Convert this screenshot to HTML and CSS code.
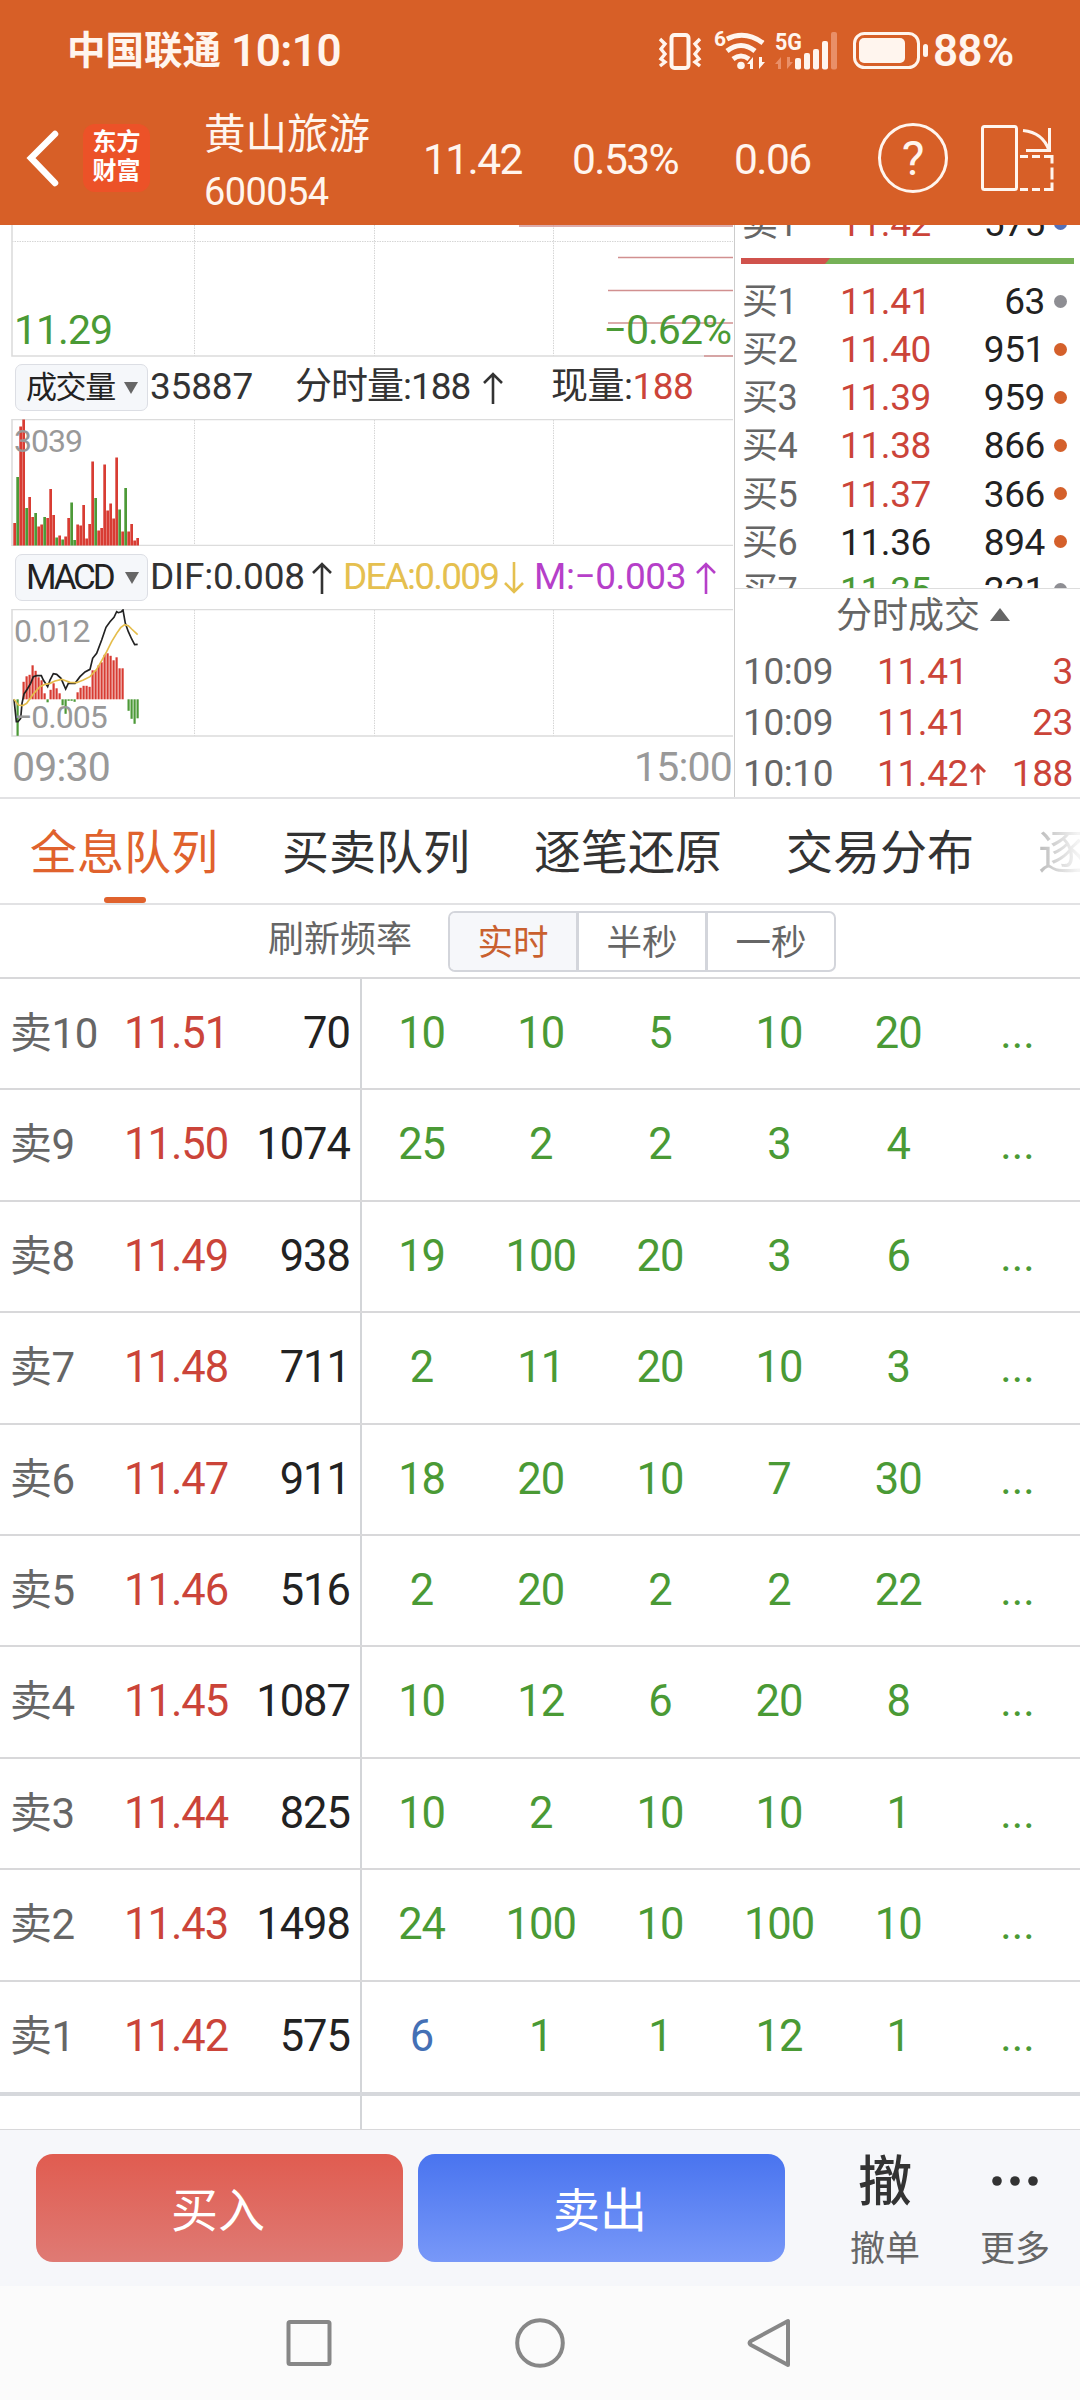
FILE: index.html
```html
<!DOCTYPE html>
<html lang="zh-CN">

<head>
    <meta charset="UTF-8">
    <meta name="viewport" content="width=device-width, initial-scale=1.0">
    <title>黄山旅游 600054</title>
    <link rel="stylesheet" href="styles.css">
</head>

<body>
    <header>
        <div class="status">
            <span class="carrier">中国联通</span>
            <span class="clock">10:10</span>
            <svg class="status-icons" width="275" height="44" viewBox="655 29 275 44">
                <g fill="none" stroke="#fff5ee" stroke-width="4">
                    <rect x="671.5" y="35" width="17" height="33" rx="3" />
                    <path stroke-width="3.4" d="M660 39l5 5-4 5 4 5-4 5 4 3-5 4M700 39l-5 5 4 5-4 5 4 5-4 3 5 4" />
                    <g stroke-width="5">
                        <path d="M727 39q18-9 36 4M727 51q14-11 28 0M733 59q8-6 16 0" />
                    </g>
                    <rect x="854.5" y="33.5" width="64" height="34" rx="10" stroke-width="3" />
                </g>
                <g fill="#fff5ee">
                    <circle cx="741" cy="65.500" r="3.800" />
                    <path d="M747 64l6-7v12h-3v-5zM765 62l-6 7V57h3v5z" />
                    <rect x="795" y="58" width="6" height="11.500" rx="2" />
                    <rect x="804" y="53" width="6" height="16.500" rx="2" />
                    <rect x="813" y="49" width="6" height="20.500" rx="2" />
                    <rect x="822" y="41" width="6" height="28.500" rx="2" />
                    <rect x="859" y="38" width="46" height="25" rx="5" />
                    <rect x="923" y="44" width="5" height="13" rx="2.500" />
                    <text x="714" y="46" font-size="21" font-weight="700">6</text>
                    <text x="775" y="50" font-size="24" font-weight="700" textLength="27" lengthAdjust="spacingAndGlyphs">5G</text>
                </g>
                <g fill="#e98f68">
                    <rect x="831" y="32" width="6" height="37.500" rx="2" />
                    <path d="M775 64l6-7v12h-3v-5zM793 62l-6 7V57h3v5z" />
                </g>
            </svg>
            <span class="battery">88%</span>
        </div>
        <div class="titlebar">
            <svg class="back" width="36" height="60" viewBox="0 0 36 60">
                <path d="M30 6L6 30l24 25" fill="none" stroke="#fff" stroke-width="6.500" stroke-linecap="round" />
            </svg>
            <div class="logo">东方<br>财富</div>
            <div class="stock">
                <div class="name">黄山旅游</div>
                <div class="code">600054</div>
            </div>
            <div class="quote price">11.42</div>
            <div class="quote pct">0.53%</div>
            <div class="quote diff">0.06</div>
            <div class="help">?</div>
            <svg class="rotate" width="76" height="70" viewBox="980 122 76 70" fill="none" stroke="#fff5ee"
                stroke-width="3">
                <rect x="983.500" y="125.500" width="34" height="63" rx="2" />
                <path d="M1024 129.500q20 2 26 20M1050.500 127v22.500h-23.500" />
                <path d="M1021 155.500h8m4 0h8m4 0h8v7m0 4v12m0 3v7h-8m-4 0h-8m-4 0h-8" />
            </svg>
        </div>
    </header>

    <main class="market">
        <section class="charts">
            <div class="box minute">
                <svg width="735" height="132" viewBox="0 225 735 132">
                    <path class="grid" d="M12 241.500H733M194.500 225V356M374.500 225V356M553.500 225V356" />
                    <path class="frame" d="M12 225V356H733" />
                    <path class="level" d="M519 226H733M618 257.500H733M608 290.500H733M608 323H733M704 356H733" />
                </svg>
                <span class="low">11.29</span>
                <span class="lowpct">−0.62%</span>
            </div>
            <div class="legend">
                <span class="chip">成交量<i></i></span>
                <span class="l-vol">35887</span>
                <span class="l-min">分时量:188</span><svg class="arr"><use href="#up" /></svg>
                <span class="l-now">现量:<b>188</b></span>
            </div>
            <div class="box">
                <svg width="735" height="127" viewBox="0 419 735 127">
                    <path class="grid" d="M194.500 420V545M374.500 420V545M553.500 420V545" />
                    <path class="frame" d="M733 419.500H12V545.500H733" />
                    <g id="volume"></g>
                </svg>
                <span class="mark top">3039</span>
            </div>
            <div class="legend">
                <span class="chip macd">MACD<i></i></span>
                <span class="dif">DIF:0.008</span><svg class="arr"><use href="#up" /></svg>
                <span class="dea">DEA:0.009</span><svg class="arr yellow"><use href="#down" /></svg>
                <span class="m">M:−0.003</span><svg class="arr purple"><use href="#up" /></svg>
            </div>
            <div class="box">
                <svg width="735" height="128" viewBox="0 609 735 128">
                    <path class="grid" d="M194.500 610V736M374.500 610V736M553.500 610V736" />
                    <path class="frame" d="M733 609.500H12V736H733" />
                    <g id="macd"></g>
                    <g transform="translate(0 540) scale(.33333)" fill="none" stroke-width="5">
                        <polyline stroke="#222" points="42,478 49,545 54,545 62,535 66,490 72,462 82,447 92,430 100,410 110,407 124,407 130,420 143,440 150,420 160,401 170,403 183,415 197,447 205,430 225,430 240,410 255,396 270,388 278,355 290,340 305,300 318,262 330,245 342,232 350,215 355,218 364,215 369,210 376,250 385,275 395,297 404,314 413,313" />
                        <polyline stroke="#e5bd4b" points="42,478 55,495 68,497 80,490 100,462 120,440 135,433 150,430 165,423 185,418 210,427 230,428 250,420 270,410 290,388 305,362 320,335 335,305 350,280 362,263 374,254 385,257 395,267 413,284" />
                    </g>
                </svg>
                <span class="mark top">0.012</span>
                <span class="mark bottom">−0.005</span>
            </div>
            <div class="times"><span>09:30</span><span>15:00</span></div>
        </section>

        <aside class="book">
            <div class="levels">
                <div class="lv"><span>卖1</span><span class="red">11.42</span><span>575</span><i class="blue"></i></div>
                <svg class="ratio" width="333" height="6">
                    <rect width="333" height="6" fill="#76b157" />
                    <path d="M0 0h89l-5 6H0z" fill="#d0524c" />
                </svg>
                <div class="lv"><span>买1</span><span class="red">11.41</span><span>63</span><i class="gray"></i></div>
                <div class="lv"><span>买2</span><span class="red">11.40</span><span>951</span><i></i></div>
                <div class="lv"><span>买3</span><span class="red">11.39</span><span>959</span><i></i></div>
                <div class="lv"><span>买4</span><span class="red">11.38</span><span>866</span><i></i></div>
                <div class="lv"><span>买5</span><span class="red">11.37</span><span>366</span><i></i></div>
                <div class="lv"><span>买6</span><span>11.36</span><span>894</span><i></i></div>
                <div class="lv"><span>买7</span><span class="green">11.35</span><span>231</span><i class="gray"></i></div>
            </div>
            <div class="deals">
                <div class="deals-title">分时成交<i></i></div>
                <div class="deal"><span>10:09</span><span class="red">11.41</span><span class="red">3</span></div>
                <div class="deal"><span>10:09</span><span class="red">11.41</span><span class="red">23</span></div>
                <div class="deal"><span>10:10</span><span class="red">11.42<svg width="18" height="24" viewBox="0 0 18 24">
                            <path d="M9 23V3M2 10l7-7 7 7" fill="none" stroke="#cb4439" stroke-width="3" />
                        </svg></span><span class="red">188</span></div>
            </div>
        </aside>
    </main>

    <nav class="tabs">
        <span class="active">全息队列</span>
        <span>买卖队列</span>
        <span>逐笔还原</span>
        <span>交易分布</span>
        <span class="fade">逐</span>
    </nav>

    <div class="freq">
        <label>刷新频率</label>
        <div class="seg">
            <span class="on">实时</span>
            <span>半秒</span>
            <span>一秒</span>
        </div>
    </div>

    <div class="queue" id="queue"></div>
    <div class="queue-end"><div></div></div>

    <footer class="trade">
        <button class="buy">买入</button>
        <button class="sell">卖出</button>
        <div class="act cancel"><b>撤</b><span>撤单</span></div>
        <div class="act more">
            <svg width="46" height="10" fill="#333">
                <circle cx="5" cy="5" r="4.800" />
                <circle cx="23" cy="5" r="4.800" />
                <circle cx="41" cy="5" r="4.800" />
            </svg>
            <span>更多</span>
        </div>
    </footer>

    <div class="sysnav">
        <svg width="540" height="60" viewBox="270 2313 540 60" fill="none" stroke="#878787" stroke-width="4">
            <rect x="288.500" y="2322" width="41" height="42" rx="1.500" />
            <circle cx="540" cy="2343" r="22.800" />
            <path d="M788 2321v44l-37-20q-3-2 0-4z" stroke-linejoin="round" />
        </svg>
    </div>

    <svg class="defs">
        <symbol id="up" viewBox="0 0 20 34">
            <path d="M10 33V3M1 12l9-9 9 9" fill="none" stroke="currentColor" stroke-width="2.600" />
        </symbol>
        <symbol id="down" viewBox="0 0 20 34">
            <path d="M10 1v30M1 22l9 9 9-9" fill="none" stroke="currentColor" stroke-width="2.600" />
        </symbol>
    </svg>

    <script>
        const RED = '#d83c33';
        const GREEN = '#4d9a38';

        // height in px, negative = falling minute
        const volume = [22.5, -68.5, 119, 126, -37.5, 48.500, 28.500, -32.500, 19, 21, -28.500, 27.500, 56.500, 30.500, -8, 10, -6, 9, 27.500, -43,
            -5.500, 21, 20, 40.500, 7, 21.500, 84, -47.500, 15, 17.500, 81, 35, 42, 27, 88, -36, 14, -57.500, 14, 21.500, 5, 7.500];
        const macd = [0, -36.500, 0, 17.500, 23, 24.500, 34, 28.500, 22, 19, 6, -3, 9.500, 16, 11, 6, -6, -14.500, -1.500, -1.500, -2.500, 7, 11.500, 13.500,
            13.500, 12.500, 29, 29, 34, 37, 44.500, 46, 43.500, 39, 42, 31, 31, 0, -11.500, -19.500, -24.500, -19];

        document.getElementById('volume').innerHTML = volume.map((h, i) =>
            `<rect x="${13.3 + i * 3}" y="${545.5 - Math.abs(h)}" width="2.700" height="${Math.abs(h)}" fill="${h > 0 ? RED : GREEN}"/>`).join('');
        document.getElementById('macd').innerHTML = macd.map((h, i) =>
            `<rect x="${13.5 + i * 3}" y="${h > 0 ? 699.3 - h : 699.3}" width="2.200" height="${Math.abs(h)}" fill="${h > 0 ? RED : GREEN}"/>`).join('');

        const rows = [
            ['卖10', '11.51', 70, 10, 10, 5, 10, 20],
            ['卖9', '11.50', 1074, 25, 2, 2, 3, 4],
            ['卖8', '11.49', 938, 19, 100, 20, 3, 6],
            ['卖7', '11.48', 711, 2, 11, 20, 10, 3],
            ['卖6', '11.47', 911, 18, 20, 10, 7, 30],
            ['卖5', '11.46', 516, 2, 20, 2, 2, 22],
            ['卖4', '11.45', 1087, 10, 12, 6, 20, 8],
            ['卖3', '11.44', 825, 10, 2, 10, 10, 1],
            ['卖2', '11.43', 1498, 24, 100, 10, 100, 10],
            ['卖1', '11.42', 575, 6, 1, 1, 12, 1]
        ];
        document.getElementById('queue').innerHTML = rows.map(([label, price, vol, ...orders], r) => `
            <div class="row">
                <div class="side">
                    <span class="label">${label}</span><span class="red">${price}</span><span class="vol">${vol}</span>
                </div>
                <div class="orders">
                    ${orders.map((n, i) => `<span${r === 9 && i === 0 ? ' class="mine"' : ''}>${n}</span>`).join('')}
                    <span class="dots">...</span>
                </div>
            </div>`).join('');
    </script>
</body>

</html>
```
FILE: styles.css
```css
* {
    box-sizing: border-box;
}

body {
    margin: 0;
    width: 1080px;
    height: 2400px;
    overflow: hidden;
    display: flex;
    flex-direction: column;
    background: #fff;
    color: #222;
    font-family: Roboto, "Noto Sans CJK SC", sans-serif;
    line-height: 1.2;
}

svg {
    display: block;
    flex: none;
}

.defs {
    display: none;
}

.red {
    color: #cb4439;
}

.green {
    color: #4a9a35;
}

/* header */
header {
    height: 225px;
    background: #d75f27;
    color: #fff5ee;
    flex: none;
}

.status {
    height: 102px;
    padding-left: 67px;
    display: flex;
    align-items: center;
    white-space: nowrap;
}

.carrier {
    font-size: 38.5px;
    font-weight: 700;
    width: 164px;
}

.clock,
.battery {
    font-size: 44px;
    font-weight: 600;
}

.clock {
    width: 424px;
    letter-spacing: -0.5px;
}

.battery {
    margin-left: 3px;
    letter-spacing: -0.8px;
}

.titlebar {
    height: 112px;
    display: flex;
    align-items: center;
    padding-left: 25px;
}

.logo {
    width: 67px;
    height: 68px;
    margin-left: 22px;
    border-radius: 12px;
    background: #ec5228;
    color: #fff;
    font-size: 24px;
    font-weight: 700;
    line-height: 29px;
    padding-top: 4px;
    text-align: center;
}

.stock {
    width: 219px;
    margin-left: 54px;
    padding-top: 8px;
}

.name {
    font-size: 41.5px;
    line-height: 60px;
}

.code {
    font-size: 38px;
    line-height: 55px;
    letter-spacing: -0.6px;
}

.quote {
    font-size: 42.5px;
    letter-spacing: -1.6px;
    padding-top: 2px;
}

.price {
    width: 149px;
}

.pct {
    width: 162px;
}

.diff {
    width: 144px;
}

.help {
    width: 70px;
    height: 70px;
    border: 3px solid #fff5ee;
    border-radius: 50%;
    font-size: 48px;
    line-height: 66px;
    text-align: center;
    margin-right: 31px;
}

/* charts + order book */
.market {
    height: 574px;
    flex: none;
    display: flex;
    border-bottom: 2px solid #e2e2e4;
}

.charts {
    width: 735px;
    border-right: 1px solid #ccc;
}

.box {
    position: relative;
    height: 127px;
}

.minute {
    height: 131px;
}

.box span {
    position: absolute;
    left: 14px;
    line-height: 1;
}

.box .low,
.box .lowpct {
    bottom: 5px;
    font-size: 41px;
    color: #4a9a35;
    letter-spacing: -1px;
}

.box .lowpct {
    left: auto;
    right: 3px;
}

.box .mark {
    font-size: 32px;
    color: #999;
    letter-spacing: -1px;
}

.mark.top {
    top: 6px;
}

.mark.bottom {
    bottom: 3px;
}

.grid {
    stroke: #d6d6d6;
    stroke-dasharray: 1.5 1;
    fill: none;
}

.frame {
    stroke: #dcdcdc;
    stroke-width: 1.6;
    fill: none;
}

.level {
    stroke: #d19090;
    stroke-width: 1.5;
}

.legend {
    height: 63px;
    display: flex;
    align-items: center;
    padding-left: 15px;
    font-size: 37px;
    letter-spacing: -0.2px;
    white-space: nowrap;
    color: #333;
}

.chip {
    width: 133px;
    height: 47px;
    display: flex;
    align-items: center;
    padding-left: 10px;
    margin-right: 2px;
    background: #f5f7fa;
    border: 1px solid #dcdee4;
    border-radius: 7px;
    font-size: 31px;
    letter-spacing: -1.4px;
    color: #222;
}

.chip i {
    margin-left: 9px;
    border: 7.5px solid transparent;
    border-top: 12px solid #666;
    border-bottom: 0;
}

.macd {
    font-size: 35px;
    letter-spacing: -3.2px;
}

.macd i {
    margin-left: 13px;
}

.arr {
    width: 20px;
    height: 34px;
    color: #333;
}

.l-vol {
    width: 145px;
}

.l-min {
    width: 188px;
    letter-spacing: -1px;
}

.l-now {
    margin-left: 48px;
    letter-spacing: -0.5px;
}

.l-now b {
    font-weight: 400;
    color: #cb4439;
}

.dif {
    width: 162px;
    letter-spacing: -0.2px;
}

.dea {
    width: 161px;
    margin-left: 11px;
    letter-spacing: -1.8px;
}

.m {
    width: 162px;
    margin-left: 10px;
    letter-spacing: -0.4px;
}

.dea,
.yellow {
    color: #e5c04f;
}

.m,
.purple {
    color: #b63fc9;
}

.times {
    display: flex;
    justify-content: space-between;
    padding: 6px 2px 0 12px;
    font-size: 41px;
    line-height: 50px;
    letter-spacing: -0.8px;
    color: #999;
}

.book {
    width: 345px;
}

.levels {
    height: 364px;
    overflow: hidden;
    border-bottom: 1px solid #ddd;
}

.lv {
    height: 48.1px;
    display: grid;
    grid-template-columns: 98px 103px 102px 29px;
    align-items: center;
    padding-left: 7px;
    font-size: 37px;
    letter-spacing: -0.4px;
    line-height: 48px;
}

.lv:first-child {
    margin-top: -25px;
}

.lv span:first-child {
    color: #666;
    font-size: 36px;
}

.lv span:nth-child(3) {
    text-align: right;
}

.lv i {
    justify-self: center;
    width: 13px;
    height: 13px;
    margin: -2px 0 0 2px;
    border-radius: 50%;
    background: #d4602b;
}

.lv .gray {
    background: #8e8e93;
}

.lv .blue {
    background: #5470b8;
}

.ratio {
    margin: 10px 0 14px 6px;
}

.deals-title {
    height: 56px;
    display: flex;
    align-items: center;
    padding-left: 101px;
    gap: 10px;
    font-size: 36px;
    color: #666;
}

.deals-title i {
    border: 10.5px solid transparent;
    border-bottom: 13px solid #666;
    border-top: 0;
    margin-top: -6px;
}

.deal {
    height: 51px;
    display: grid;
    grid-template-columns: 134px 113px 83px;
    padding-left: 8px;
    font-size: 37px;
    line-height: 54px;
    letter-spacing: -0.4px;
    white-space: nowrap;
}

.deal span:first-child {
    color: #666;
}

.deal span:nth-child(2) svg {
    display: inline-block;
    margin-left: 1px;
}

.deal span:last-child {
    text-align: right;
}

/* tabs */
.tabs {
    height: 106px;
    flex: none;
    display: flex;
    gap: 64px;
    padding-left: 30px;
    border-bottom: 2px solid #e2e2e4;
    font-size: 47px;
    line-height: 107px;
    white-space: nowrap;
    overflow: hidden;
    color: #333;
}

.active {
    color: #e0622d;
    position: relative;
}

.active::after {
    content: "";
    position: absolute;
    left: 74px;
    bottom: 0;
    width: 42px;
    height: 6px;
    border-radius: 3px;
    background: #e0622d;
}

.fade {
    background: linear-gradient(90deg, #bbb, #f4f4f4 40px);
    background-clip: text;
    color: transparent;
}

.freq {
    height: 74px;
    flex: none;
    display: flex;
    align-items: center;
    padding-left: 268px;
    border-bottom: 2px solid #d8d8da;
    font-size: 36px;
    color: #666;
}

.seg {
    display: flex;
    width: 388px;
    height: 61px;
    margin-left: 36px;
    border: 2px solid #d3d5db;
    border-radius: 7px;
    line-height: 60px;
    font-size: 35.5px;
    overflow: hidden;
}

.seg span {
    flex: 1;
    text-align: center;
}

.seg span + span {
    border-left: 3px solid #d3d5db;
}

.seg .on {
    background: #f6f7fa;
    color: #c9602f;
}

/* order queue */
.queue {
    flex: none;
}

.row {
    height: 111.4px;
    display: flex;
    border-bottom: 2px solid #d8d8da;
    font-size: 43.5px;
    line-height: 109px;
    letter-spacing: -1px;
}

.row:last-child {
    height: 114px;
    border-bottom: 4px solid #d6d8dc;
}

.side {
    width: 362px;
    display: flex;
    padding-left: 10px;
    border-right: 2px solid #d3d5d8;
}

.label {
    width: 114px;
    font-size: 42px;
    letter-spacing: -0.4px;
    color: #666;
}

.vol {
    flex: 1;
    text-align: right;
    padding-right: 10px;
}

.orders {
    flex: 1;
    display: grid;
    grid-template-columns: repeat(6, 1fr);
    padding-right: 3px;
    text-align: center;
    color: #4a9a35;
}

.mine {
    color: #4470b5;
}

.dots {
    letter-spacing: 0;
}

.queue-end {
    flex: 1;
}

.queue-end div {
    width: 362px;
    height: 100%;
    border-right: 2px solid #d3d5d8;
}

/* bottom bar */
.trade {
    height: 157px;
    flex: none;
    display: flex;
    align-items: center;
    padding-left: 36px;
    background: #f6f7fa;
    border-top: 1px solid #d8d8da;
}

.trade button {
    width: 367px;
    height: 108px;
    margin-right: 15px;
    padding: 0 3px 4px 0;
    border: 0;
    border-radius: 17px;
    color: #fff;
    font-family: inherit;
    font-size: 47px;
}

.buy {
    background: linear-gradient(#e05c50, #df7a74);
}

.sell {
    background: linear-gradient(#4974ef, #7898f8);
}

.act {
    width: 70px;
    height: 130px;
    display: flex;
    flex-direction: column;
    align-items: center;
    font-size: 35px;
    line-height: 50px;
    color: #666;
}

.act span {
    margin-top: auto;
    margin-bottom: -2px;
}

.cancel {
    margin-left: 50px;
}

.cancel b {
    font-size: 54px;
    font-weight: 500;
    line-height: 80px;
    color: #333;
}

.more {
    margin-left: 60px;
}

.more svg {
    margin-top: 33px;
}

.sysnav {
    height: 114px;
    flex: none;
    display: flex;
    align-items: center;
    justify-content: center;
    background: #fbfbfb;
}
```
